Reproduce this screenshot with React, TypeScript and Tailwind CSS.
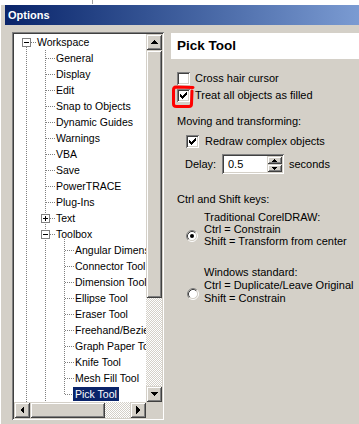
import React from 'react';

type TreeNode = { label: string; level: 0 | 1 | 2; toggle?: '+' | '-'; selected?: boolean };

const nodes: TreeNode[] = [
  { label: 'Workspace', level: 0, toggle: '-' },
  { label: 'General', level: 1 },
  { label: 'Display', level: 1 },
  { label: 'Edit', level: 1 },
  { label: 'Snap to Objects', level: 1 },
  { label: 'Dynamic Guides', level: 1 },
  { label: 'Warnings', level: 1 },
  { label: 'VBA', level: 1 },
  { label: 'Save', level: 1 },
  { label: 'PowerTRACE', level: 1 },
  { label: 'Plug-Ins', level: 1 },
  { label: 'Text', level: 1, toggle: '+' },
  { label: 'Toolbox', level: 1, toggle: '-' },
  { label: 'Angular Dimension Tool', level: 2 },
  { label: 'Connector Tool', level: 2 },
  { label: 'Dimension Tool', level: 2 },
  { label: 'Ellipse Tool', level: 2 },
  { label: 'Eraser Tool', level: 2 },
  { label: 'Freehand/Bezier Tool', level: 2 },
  { label: 'Graph Paper Tool', level: 2 },
  { label: 'Knife Tool', level: 2 },
  { label: 'Mesh Fill Tool', level: 2 },
  { label: 'Pick Tool', level: 2, selected: true },
];

// x of the vertical guide for each level, inside the tree pane
const guideX = [12, 31, 50];
const rowPad = ['pl-[21px]', 'pl-[40px]', 'pl-[59px]'];

const raised =
  'bg-[#d4d0c8] shadow-[inset_1px_1px_0_#d4d0c8,inset_-1px_-1px_0_#404040,inset_2px_2px_0_#ffffff,inset_-2px_-2px_0_#808080]';
const sunken =
  'shadow-[inset_1px_1px_0_#808080,inset_-1px_-1px_0_#ffffff,inset_2px_2px_0_#404040,inset_-2px_-2px_0_#d4d0c8]';
const track = 'bg-[image:repeating-conic-gradient(#d4d0c8_0%_25%,#ffffff_0%_50%)] bg-size-[2px_2px]';

const Arrow = ({ dir }: { dir: 'up' | 'down' | 'left' | 'right' }) => {
  const pts = {
    up: '4,0 8,4 0,4',
    down: '0,0 8,0 4,4',
    left: '4,0 4,8 0,4',
    right: '0,0 4,4 0,8',
  }[dir];
  const horiz = dir === 'left' || dir === 'right';
  return (
    <svg width={horiz ? 5 : 8} height={horiz ? 8 : 5} viewBox={horiz ? '0 0 5 8' : '0 0 8 5'} shapeRendering="crispEdges">
      <polygon points={pts} fill="#000" />
    </svg>
  );
};

const ScrollButton = ({ dir }: { dir: 'up' | 'down' | 'left' | 'right' }) => (
  <div className={`w-[16px] h-[16px] shrink-0 flex items-center justify-center ${raised}`}>
    <Arrow dir={dir} />
  </div>
);

const TreeLines = () => {
  const dot = { stroke: '#808080', strokeDasharray: '1 1', shapeRendering: 'crispEdges' as const };
  const center = (i: number) => i * 16 + 8.5;
  const toolbox = nodes.findIndex((n) => n.label === 'Toolbox');
  const last = nodes.length - 1;
  return (
    <svg className="absolute left-0 top-0" width={132} height={368}>
      <line x1={12.5} y1={13} x2={12.5} y2={368} {...dot} />
      <line x1={31.5} y1={16} x2={31.5} y2={368} {...dot} />
      <line x1={50.5} y1={toolbox * 16 + 13} x2={50.5} y2={center(last)} {...dot} />
      {nodes.map((n, i) => {
        const gx = guideX[n.level];
        const from = n.toggle ? gx + 5 : gx + 1;
        return <line key={'h' + i} x1={from} y1={center(i)} x2={gx + 10} y2={center(i)} {...dot} />;
      })}
      {nodes.map((n, i) => {
        if (!n.toggle) return null;
        const gx = guideX[n.level];
        const cy = i * 16 + 8;
        return (
          <g key={'b' + i} shapeRendering="crispEdges">
            <rect x={gx - 4 + 0.5} y={cy - 4 + 0.5} width={8} height={8} fill="#fff" stroke="#808080" />
            <rect x={gx - 2} y={cy} width={5} height={1} fill="#000" />
            {n.toggle === '+' && <rect x={gx} y={cy - 2} width={1} height={5} fill="#000" />}
          </g>
        );
      })}
    </svg>
  );
};

const Tree = () => (
  <div className={`w-[152px] h-[388px] p-[2px] ${sunken}`}>
    <div className="grid grid-cols-[132px_16px] grid-rows-[368px_16px]">
      <div className="relative bg-white overflow-hidden text-[10.5px]">
        <TreeLines />
        <div className="relative">
          {nodes.map((n) => (
            <div key={n.label} className={`h-[16px] flex items-center whitespace-nowrap ${rowPad[n.level]}`}>
              <span
                className={`h-[14px] leading-[14px] px-[2px] ${n.selected ? 'bg-[#0a246a] text-white' : ''}`}
              >
                {n.label}
              </span>
            </div>
          ))}
        </div>
      </div>
      <div className="flex flex-col">
        <ScrollButton dir="up" />
        <div className={`h-[248px] ${raised}`} />
        <div className={`flex-1 ${track}`} />
        <ScrollButton dir="down" />
      </div>
      <div className="flex">
        <ScrollButton dir="left" />
        <div className={`w-[75px] ${raised}`} />
        <div className={`flex-1 ${track}`} />
        <ScrollButton dir="right" />
      </div>
      <div className="bg-[#d4d0c8]" />
    </div>
  </div>
);

const CheckBox = ({ checked }: { checked?: boolean }) => (
  <div className={`w-[13px] h-[13px] shrink-0 bg-white flex items-center justify-center ${sunken}`}>
    {checked && (
      <svg width={7} height={7} viewBox="0 0 7 7" shapeRendering="crispEdges">
        <path
          d="M6 0h1v3h-1v1h-1v1h-1v1h-1v1h-1v-1h-1v-1h-1v-3h1v1h1v1h1v-1h1v-1h1v-1h1z"
          fill="#000"
        />
      </svg>
    )}
  </div>
);

const Radio = ({ checked }: { checked?: boolean }) => (
  <svg width={12} height={12} viewBox="0 0 12 12" className="shrink-0">
    <circle cx={6} cy={6} r={4.5} fill="#fff" />
    <path d="M9.89 2.11A5.5 5.5 0 0 0 2.11 9.89" stroke="#808080" fill="none" />
    <path d="M2.11 9.89A5.5 5.5 0 0 0 9.89 2.11" stroke="#ffffff" fill="none" />
    <path d="M9.18 2.82A4.5 4.5 0 0 0 2.82 9.18" stroke="#404040" fill="none" />
    <path d="M2.82 9.18A4.5 4.5 0 0 0 9.18 2.82" stroke="#d4d0c8" fill="none" />
    {checked && <circle cx={6} cy={6} r={2} fill="#000" />}
  </svg>
);

const SpinBox = ({ value }: { value: string }) => (
  <div className={`w-[62px] h-[20px] p-[2px] bg-white flex ${sunken}`}>
    <div className="flex-1 pl-[4px] leading-[16px]">{value}</div>
    <div className="w-[15px] flex flex-col">
      <div className={`h-[8px] flex items-center justify-center ${raised}`}>
        <svg width={5} height={3} viewBox="0 0 5 3" shapeRendering="crispEdges">
          <polygon points="2.5,0 5,3 0,3" fill="#000" />
        </svg>
      </div>
      <div className={`h-[8px] flex items-center justify-center ${raised}`}>
        <svg width={5} height={3} viewBox="0 0 5 3" shapeRendering="crispEdges">
          <polygon points="0,0 5,0 2.5,3" fill="#000" />
        </svg>
      </div>
    </div>
  </div>
);

const PickToolPage = () => (
  <div className="ml-[7px] mt-[1px] flex-1 flex flex-col">
    <div className="h-[26px] bg-white flex items-center pl-[6px] text-[13.5px] font-bold">Pick Tool</div>
    <div className="pl-[6px] flex flex-col leading-[13px]">
      <div className="mt-[11px] h-[17px] flex items-center gap-[5px]">
        <CheckBox />
        <span>Cross hair cursor</span>
      </div>
      <div className="h-[17px] flex items-center gap-[5px]">
        <CheckBox checked />
        <span>Treat all objects as filled</span>
      </div>
      <div className="mt-[11px]">Moving and transforming:</div>
      <div className="mt-[5px] h-[17px] pl-[9px] flex items-center gap-[6px]">
        <CheckBox checked />
        <span>Redraw complex objects</span>
      </div>
      <div className="mt-[4px] h-[20px] pl-[8px] flex items-center">
        <span className="w-[37px]">Delay:</span>
        <SpinBox value="0.5" />
        <span className="ml-[5px]">seconds</span>
      </div>
      <div className="mt-[19px]">Ctrl and Shift keys:</div>
      <div className="mt-[5px] pl-[9px] flex gap-[6px]">
        <div className="mt-[19px]">
          <Radio checked />
        </div>
        <div className="leading-[12px]">
          <div>Traditional CorelDRAW:</div>
          <div>Ctrl = Constrain</div>
          <div>Shift = Transform from center</div>
        </div>
      </div>
      <div className="mt-[19px] pl-[10px] flex gap-[5px]">
        <div className="mt-[22px]">
          <Radio />
        </div>
        <div className="leading-[13px]">
          <div>Windows standard:</div>
          <div>Ctrl = Duplicate/Leave Original</div>
          <div>Shift = Constrain</div>
        </div>
      </div>
    </div>
  </div>
);

export default function App() {
  return (
    <div className="relative w-[359px] h-[424px] bg-white overflow-hidden text-[11px] text-black font-['Liberation_Sans',Arial,sans-serif]">
      <div className="h-[4px] pl-[92px]">
        <div className="w-px h-full bg-[#a0a0a0]" />
      </div>
      <div className="h-[420px] bg-[#d4d0c8] border-l border-t border-white pl-[4px]">
        <div className="h-[20px] bg-linear-to-r from-[#0a246a] to-[#7b9bd2] flex items-center pl-[3px] text-white font-bold text-[11px]">
          Options
        </div>
        <div className="flex pt-[7px]">
          <div className="ml-[7px]">
            <Tree />
          </div>
          <PickToolPage />
        </div>
      </div>
      {/* red hand-drawn mark around the "Treat all objects" checkbox */}
      <svg className="absolute left-[168px] top-[83px]" width={30} height={30} viewBox="0 0 30 30">
        <path
          d="M25 4.5 L8 4 Q5.5 4 5.5 7 L5.5 21 Q5.5 23.5 8.5 23.5 L21 23.5 Q23.5 23.5 23.5 21 L24 8"
          stroke="#ff0000"
          strokeWidth={3}
          fill="none"
          strokeLinecap="round"
          strokeLinejoin="round"
        />
      </svg>
    </div>
  );
}
